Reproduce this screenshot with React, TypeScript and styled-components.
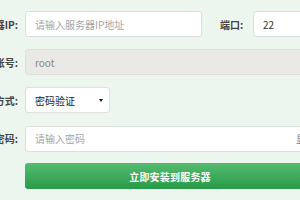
import React from "react";
import styled, { createGlobalStyle } from "styled-components";

const GlobalStyle = createGlobalStyle`
  html, body {
    margin: 0;
    padding: 0;
    background: #edf5ef;
    overflow: hidden;
  }
  body {
    font-family: "Noto Sans CJK SC", "Noto Sans", sans-serif;
  }
`;

const Form = styled.div`
  display: flex;
  flex-direction: column;
  gap: 12px;
  padding-top: 11px;
  margin-left: -42px;
  width: 400px;
`;

const Row = styled.div`
  display: flex;
  align-items: center;
  height: 26px;
`;

const Label = styled.label<{ $width?: number; $gap?: number }>`
  flex: none;
  width: ${(p) => p.$width ?? 60}px;
  margin-left: ${(p) => p.$gap ?? 0}px;
  margin-right: ${(p) => (p.$gap ? 10 : 7)}px;
  text-align: right;
  font-size: 10px;
  font-weight: bold;
  color: #444;
  white-space: nowrap;
`;

const Input = styled.input<{ $width: number }>`
  flex: none;
  box-sizing: border-box;
  width: ${(p) => p.$width}px;
  height: 26px;
  padding: 0 9px;
  border: 1px solid #dcdfdc;
  border-radius: 3px;
  background: #fff;
  font-family: inherit;
  font-size: 10px;
  color: #333;
  outline: none;
  &::placeholder {
    color: #a5a5a5;
  }
  &:disabled {
    background: #ebe9e5;
    color: #8a8a8a;
    border-color: #e0dfdb;
  }
`;

const Select = styled.div`
  flex: none;
  box-sizing: border-box;
  width: 85px;
  height: 26px;
  padding: 0 5px 0 9px;
  display: flex;
  align-items: center;
  justify-content: space-between;
  border: 1px solid #dcdfdc;
  border-radius: 3px;
  background: #fff;
  font-size: 10px;
  color: #222;
`;

const Caret = styled.span`
  width: 0;
  height: 0;
  margin-right: 1px;
  border-left: 2px solid transparent;
  border-right: 2px solid transparent;
  border-top: 3px solid #111;
`;

const PasswordWrap = styled.div`
  position: relative;
  flex: none;
`;

const Toggle = styled.span`
  position: absolute;
  right: 9px;
  top: 50%;
  transform: translateY(-50%);
  font-size: 10px;
  color: #777;
`;

const Submit = styled.button`
  flex: none;
  box-sizing: border-box;
  width: 290px;
  height: 26px;
  margin-left: 67px;
  border: none;
  border-radius: 3px;
  background: linear-gradient(#55bb70, #289a48);
  color: #fff;
  font-family: inherit;
  font-size: 10px;
  font-weight: bold;
  letter-spacing: 0.2px;
`;

export default function App() {
  return (
    <>
      <GlobalStyle />
      <Form>
        <Row>
          <Label>服务器IP:</Label>
          <Input $width={177} placeholder="请输入服务器IP地址" />
          <Label $width={23} $gap={18}>
            端口:
          </Label>
          <Input $width={70} defaultValue="22" />
        </Row>
        <Row>
          <Label>账号:</Label>
          <Input $width={300} defaultValue="root" disabled />
        </Row>
        <Row>
          <Label>登录方式:</Label>
          <Select>
            <span>密码验证</span>
            <Caret />
          </Select>
        </Row>
        <Row>
          <Label>密码:</Label>
          <PasswordWrap>
            <Input $width={300} type="password" placeholder="请输入密码" />
            <Toggle>显示</Toggle>
          </PasswordWrap>
        </Row>
        <Row>
          <Submit>立即安装到服务器</Submit>
        </Row>
      </Form>
    </>
  );
}
